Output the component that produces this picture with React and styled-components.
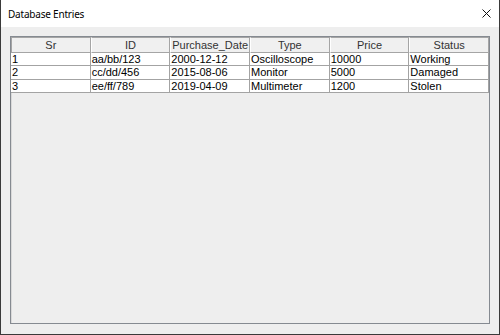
import React from "react";
import styled, { createGlobalStyle } from "styled-components";

const Global = createGlobalStyle`
  html, body { margin: 0; padding: 0; background: #2b2b2b; }
  * { box-sizing: border-box; }
`;

const Window = styled.div`
  width: 500px;
  height: 335px;
  display: flex;
  flex-direction: column;
  background: #eeeeee;
  border-left: 1px solid #3a3a3a;
  border-right: 1px solid #3a3a3a;
  border-bottom: 1px solid #3a3a3a;
  overflow: hidden;
`;

const TitleBar = styled.div`
  height: 27px;
  flex: none;
  display: flex;
  align-items: center;
  justify-content: space-between;
  background: #ffffff;
  padding: 0 8px 0 7px;
`;

const Title = styled.span`
  font-family: "Noto Sans", "Open Sans", sans-serif;
  font-size: 10px;
  letter-spacing: -0.2px;
  color: #000;
`;

const CloseIcon = styled.svg`
  width: 9px;
  height: 9px;
  display: block;
`;

const Content = styled.div`
  flex: 1;
  display: flex;
  padding: 9px 9px 10px 9px;
`;

const ScrollPane = styled.div`
  flex: 1;
  border: 1px solid #858a91;
  box-shadow: inset 1px 1px 0 #d9d9d9;
  background: #eeeeee;
  display: flex;
  flex-direction: column;
`;

const Table = styled.div`
  display: grid;
  grid-template-columns: repeat(6, 1fr);
  grid-template-rows: 16px;
  grid-auto-rows: 13.33px;
  font-family: "Liberation Sans", Arial, sans-serif;
  font-size: 11px;
`;

const HeaderCell = styled.div`
  height: 16px;
  display: flex;
  align-items: center;
  justify-content: center;
  background: #f0f0f0;
  color: #333;
  border: 1px solid #a5a5a5;
  border-left-color: ${(p) => (p.$first ? "#a5a5a5" : "#ffffff")};
  line-height: 13px;
`;

const Cell = styled.div`
  background: #ffffff;
  color: #000;
  border-right: 1px solid #a3a3a3;
  border-bottom: 1px solid #a3a3a3;
  padding-left: 1px;
  line-height: 12px;
  white-space: nowrap;
  overflow: hidden;
`;

const columns = ["Sr", "ID", "Purchase_Date", "Type", "Price", "Status"];
const rows = [
  ["1", "aa/bb/123", "2000-12-12", "Oscilloscope", "10000", "Working"],
  ["2", "cc/dd/456", "2015-08-06", "Monitor", "5000", "Damaged"],
  ["3", "ee/ff/789", "2019-04-09", "Multimeter", "1200", "Stolen"],
];

export default function App() {
  return (
    <>
      <Global />
      <Window>
        <TitleBar>
          <Title>Database Entries</Title>
          <CloseIcon viewBox="0 0 9 9">
            <path d="M0.5 0.5 L8.5 8.5 M8.5 0.5 L0.5 8.5" stroke="#111" strokeWidth="1" />
          </CloseIcon>
        </TitleBar>
        <Content>
          <ScrollPane>
            <Table>
              {columns.map((c, i) => (
                <HeaderCell key={c} $first={i === 0}>{c}</HeaderCell>
              ))}
              {rows.map((r) =>
                r.map((v, j) => <Cell key={r[0] + j}>{v}</Cell>)
              )}
            </Table>
          </ScrollPane>
        </Content>
      </Window>
    </>
  );
}
